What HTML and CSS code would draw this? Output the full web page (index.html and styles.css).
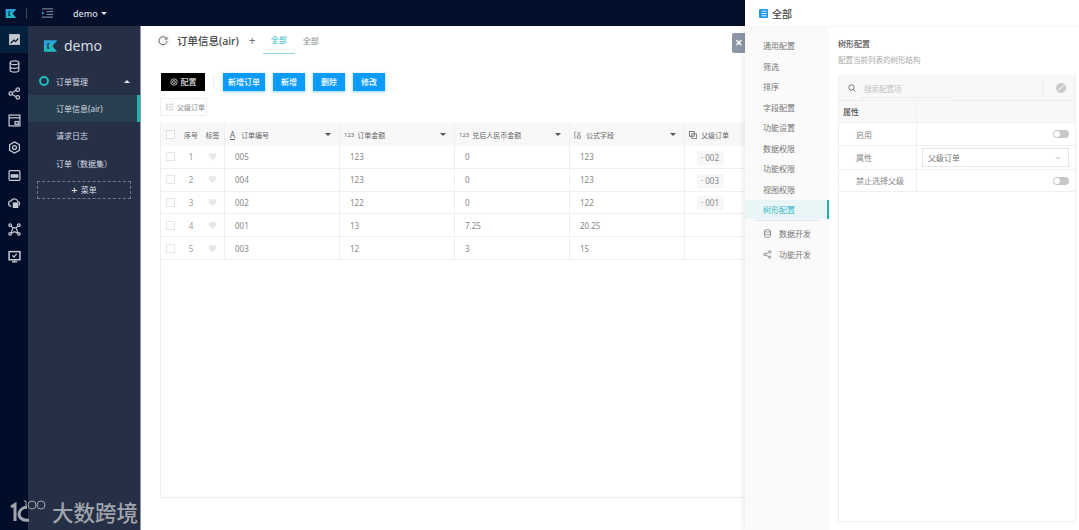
FILE: index.html
```html
<!DOCTYPE html>
<html lang="zh">
<head>
<meta charset="utf-8">
<title>订单信息(air)</title>
<link rel="stylesheet" href="styles.css">
</head>
<body>
<div class="app">
  <header class="topbar">
    <svg class="brand" viewBox="0 0 16 14"><path fill-rule="evenodd" d="M1 1h14l-5 6 5 6H1zM4.500 4v6h2.800L5.500 7l1.800-3z" fill="#1fb5c4"/><path d="M1 1h14l-2.500 3H4.500v3H1z" fill="#2a9fe0"/></svg>
    <span class="vline"></span>
    <svg class="fold" viewBox="0 0 12 10" fill="none" stroke="#9aa4b5" stroke-width="1"><path d="M0 .5h12M5 3.500h7M5 6.500h7M0 9.500h12"/><path d="M0 3l2.500 2L0 7z" fill="#2a9fe0" stroke="none"/></svg>
    <span class="app-name">demo</span><span class="caret-white"></span>
  </header>
  <div class="body">
    <nav class="rail">
      <div class="rail-item on"><svg viewBox="0 0 12 12"><rect x="1" y="1" width="10" height="10" fill="#c4c9d2"/><path d="M2.500 9.500l3-3 1.500 1.500 2.500-3" stroke="#04102b" fill="none"/></svg></div>
      <div class="rail-item"><svg viewBox="0 0 12 12" fill="none" stroke="#c4c9d2"><ellipse cx="6" cy="2.500" rx="4" ry="1.700"/><path d="M2 2.500v7c0 1 1.800 1.700 4 1.700s4-.7 4-1.700v-7M2 6c0 1 1.800 1.700 4 1.700S10 7 10 6"/></svg></div>
      <div class="rail-item"><svg viewBox="0 0 12 12" fill="none" stroke="#c4c9d2"><circle cx="2.500" cy="6" r="1.600"/><circle cx="9" cy="2.500" r="1.600"/><circle cx="9" cy="9.500" r="1.600"/><path d="M4 5l3.500-2M4 7l3.500 2"/></svg></div>
      <div class="rail-item"><svg viewBox="0 0 12 12" fill="none" stroke="#c4c9d2"><rect x="1" y="1" width="10" height="10"/><path d="M1 3.500h10"/><rect x="6.500" y="7" width="3" height="2.500"/></svg></div>
      <div class="rail-item"><svg viewBox="0 0 12 12" fill="none" stroke="#c4c9d2"><path d="M6 .8l4.500 2.600v5.200L6 11.200 1.500 8.600V3.400z"/><circle cx="6" cy="6" r="1.800"/></svg></div>
      <div class="rail-item"><svg viewBox="0 0 12 12" fill="none" stroke="#c4c9d2"><rect x="1" y="1.500" width="10" height="9" rx="1"/><path d="M3 5.500h6v2H3z" fill="#c4c9d2"/></svg></div>
      <div class="rail-item"><svg viewBox="0 0 12 12" fill="none" stroke="#c4c9d2"><path d="M3 9.500a2.500 2.500 0 0 1 0-5 3.200 3.200 0 0 1 6 .5 2 2 0 0 1 1 3.500"/><rect x="5" y="6.500" width="4" height="4" fill="#c4c9d2"/></svg></div>
      <div class="rail-item"><svg viewBox="0 0 12 12" fill="none" stroke="#c4c9d2"><circle cx="2" cy="2" r="1.200"/><circle cx="10" cy="2" r="1.200"/><circle cx="2" cy="10" r="1.200"/><circle cx="10" cy="10" r="1.200"/><path d="M3 3l1.500 1.500h3L9 3M4.500 4.500l-1 3-.5 1.500M7.500 4.500l1 3 .5 1.500M3 9.500l3-1.500 3 1.500"/></svg></div>
      <div class="rail-item"><svg viewBox="0 0 12 12" fill="none" stroke="#c4c9d2"><rect x="1" y="1.500" width="10" height="7.500" stroke-width="1.400"/><path d="M4 5l1.500 1.500L8 3.500M6 9v2M3.500 11h5"/></svg></div>
    </nav>
    <aside class="side">
      <div class="side-logo">
        <svg class="side-mark" viewBox="0 0 16 14"><path fill-rule="evenodd" d="M1 1h14l-5 6 5 6H1zM4.500 4v6h2.800L5.500 7l1.800-3z" fill="#22b8bf"/><path d="M1 1h14l-2.500 3H4.500v3H1z" fill="#2a9fe0"/></svg>
        <span>demo</span>
      </div>
      <div class="group"><span class="ring"></span><span class="group-name">订单管理</span><span class="caret-up"></span></div>
      <div class="side-link active">订单信息(air)</div>
      <div class="side-link">请求日志</div>
      <div class="side-link">订单（数据集）</div>
      <div class="add-menu"><span class="plus">+</span> 菜单</div>
    </aside>
    <main class="main">
      <div class="title-row">
        <span class="refresh"><svg viewBox="0 0 10 10" fill="none" stroke="#666"><path d="M8.600 3A4 4 0 1 0 9 5"/><path d="M9 1v2.300H6.700" stroke-width=".8"/></svg></span>
        <h1 class="page-title">订单信息(air)</h1>
        <span class="add-tab">+</span>
        <span class="tab tab-on">全部</span>
        <span class="tab">全部</span>
      </div>
      <div class="actions">
        <button class="btn btn-black"><svg class="gear" viewBox="0 0 10 10" fill="none" stroke="#ddd"><circle cx="5" cy="5" r="4"/><circle cx="5" cy="5" r="1.800"/></svg>配置</button>
        <span class="sep"></span>
        <button class="btn btn-blue btn-wide">新增订单</button>
        <button class="btn btn-blue">新增</button>
        <button class="btn btn-blue">删除</button>
        <button class="btn btn-blue">修改</button>
      </div>
      <div class="tree-btn-row">
        <span class="tree-btn"><svg viewBox="0 0 10 10" fill="none" stroke="#aaa" stroke-width=".8"><path d="M1 1v8M1 1.500h1M1 5h1M1 8.500h1M3.500 1.500h6M3.500 5h6M3.500 8.500h6"/></svg>父级订单</span>
      </div>
      <div class="table">
        <div class="tr th">
          <div class="c-fixed"><span class="chk chk-h"></span><span class="seq">序号</span><span class="tag">标签</span></div>
          <div class="col"><span class="ty ty-a">A</span>订单编号<span class="sort"></span></div>
          <div class="col"><span class="ty">123</span>订单金额<span class="sort"></span></div>
          <div class="col"><span class="ty">123</span>兑后人民币金额<span class="sort"></span></div>
          <div class="col"><svg class="ty-i" viewBox="0 0 10 10" fill="none" stroke="#666" stroke-width=".8"><path d="M1 1v8h1M1 1h1M4 1l4 4M8 1L4 5M4 6h4v3H4z"/></svg>公式字段<span class="sort"></span></div>
          <div class="col"><svg class="ty-i" viewBox="0 0 10 10" fill="none" stroke="#555" stroke-width=".9"><rect x=".5" y=".5" width="6" height="6"/><path d="M3.500 3.500h6v6h-6z"/></svg>父级订单</div>
        </div>
        <div class="tr"><div class="c-fixed"><span class="chk"></span><span class="seq n">1</span><span class="tag"><span class="heart">♥</span></span></div><div class="col">005</div><div class="col">123</div><div class="col">0</div><div class="col">123</div><div class="col"><span class="chip">· 002</span></div></div>
        <div class="tr"><div class="c-fixed"><span class="chk"></span><span class="seq n">2</span><span class="tag"><span class="heart">♥</span></span></div><div class="col">004</div><div class="col">123</div><div class="col">0</div><div class="col">123</div><div class="col"><span class="chip">· 003</span></div></div>
        <div class="tr"><div class="c-fixed"><span class="chk"></span><span class="seq n">3</span><span class="tag"><span class="heart">♥</span></span></div><div class="col">002</div><div class="col">122</div><div class="col">0</div><div class="col">122</div><div class="col"><span class="chip">· 001</span></div></div>
        <div class="tr"><div class="c-fixed"><span class="chk"></span><span class="seq n">4</span><span class="tag"><span class="heart">♥</span></span></div><div class="col">001</div><div class="col">13</div><div class="col">7.25</div><div class="col">20.25</div><div class="col"></div></div>
        <div class="tr"><div class="c-fixed"><span class="chk"></span><span class="seq n">5</span><span class="tag"><span class="heart">♥</span></span></div><div class="col">003</div><div class="col">12</div><div class="col">3</div><div class="col">15</div><div class="col"></div></div>
      </div>
    </main>
  </div>
  <div class="watermark">
    <svg class="wm-logo" viewBox="0 0 37 24" fill="none" stroke="#a0a4ab"><path d="M1 8l4-2.500V22" stroke-width="3"/><path d="M17 8a8.500 8.500 0 0 0-8 7c0 4 4 7 10 6" stroke-width="3"/><path d="M14 2h2v8" stroke-width="1"/><circle cx="22" cy="6" r="4"/><circle cx="31" cy="6" r="4"/></svg>
    <span>大数跨境</span>
  </div>
  <button class="close">✕</button>
  <section class="drawer">
    <div class="drawer-head">
      <svg class="doc" viewBox="0 0 9 9"><rect width="9" height="9" rx="1" fill="#1e96ec"/><path d="M2.500 2.200h5M2.500 4.500h5M2.500 6.800h5" stroke="#fff" stroke-width=".9"/></svg>
      <span>全部</span>
    </div>
    <div class="drawer-body">
      <div class="d-menu">
        <div class="d-item">通用配置</div>
        <div class="d-item">筛选</div>
        <div class="d-item">排序</div>
        <div class="d-item">字段配置</div>
        <div class="d-item">功能设置</div>
        <div class="d-item">数据权限</div>
        <div class="d-item">功能权限</div>
        <div class="d-item">视图权限</div>
        <div class="d-item d-on">树形配置</div>
        <div class="d-div"></div>
        <div class="d-sub"><svg viewBox="0 0 12 12" fill="none" stroke="#777"><ellipse cx="6" cy="2.500" rx="4" ry="1.700"/><path d="M2 2.500v7c0 1 1.800 1.700 4 1.700s4-.7 4-1.700v-7M2 6c0 1 1.800 1.700 4 1.700S10 7 10 6"/></svg>数据开发</div>
        <div class="d-sub"><svg viewBox="0 0 12 12" fill="none" stroke="#777"><circle cx="2.500" cy="6" r="1.600"/><circle cx="9" cy="2.500" r="1.600"/><circle cx="9" cy="9.500" r="1.600"/><path d="M4 5l3.500-2M4 7l3.500 2"/></svg>功能开发</div>
      </div>
      <div class="d-content">
        <h2 class="d-title">树形配置</h2>
        <p class="d-desc">配置当前列表的树形结构</p>
        <div class="cfg">
          <div class="cfg-search">
            <svg class="search-i" viewBox="0 0 10 10" fill="none" stroke="#555"><circle cx="4.300" cy="4.300" r="3.300"/><path d="M6.800 6.800L9.200 9.200"/></svg>
            <span class="search-input">搜索配置项</span>
            <span class="search-sep"></span>
            <svg class="ban" viewBox="0 0 10 10"><circle cx="5" cy="5" r="5" fill="#c9c9c9"/><path d="M2.500 7.500l5-5" stroke="#fff"/></svg>
          </div>
          <div class="cfg-row cfg-h"><div class="k">属性</div><div class="v"></div></div>
          <div class="cfg-row r1"><div class="k ki">启用</div><div class="v"><span class="sw"></span></div></div>
          <div class="cfg-row r2"><div class="k ki">属性</div><div class="v"><div class="select"><span>父级订单</span><svg viewBox="0 0 8 5" fill="none" stroke="#999" stroke-width=".8"><path d="M1 1l3 3 3-3"/></svg></div></div></div>
          <div class="cfg-row r3"><div class="k ki">禁止选择父级</div><div class="v"><span class="sw"></span></div></div>
        </div>
      </div>
    </div>
  </section>
</div>
</body>
</html>
```
FILE: styles.css
```css
* { box-sizing: border-box; }
html, body { margin: 0; height: 100%; overflow: hidden; }
body { font-family: "Noto Sans", "Noto Sans CJK SC", sans-serif; font-size: 8px; color: #666; background: #fff; }
.app { position: relative; width: 1079px; height: 530px; display: flex; flex-direction: column; overflow: hidden; }

.topbar { height: 26px; background: #04102b; display: flex; align-items: center; flex: none; color: #d8dce3; padding-left: 5px; }
.brand { width: 12px; height: 11px; }
.vline { width: 1px; height: 11px; background: #3a4559; margin-left: 9px; }
.fold { width: 11px; height: 10px; margin-left: 15px; }
.app-name { font-size: 9px; font-weight: 500; margin-left: 20px; }
.caret-white { margin-left: 3px; border: 3px solid transparent; border-top: 3px solid #e4e7ec; border-bottom: 0; width: 0; height: 0; }

.body { flex: 1; display: flex; min-height: 0; }
.rail { width: 28px; background: #020d29; flex: none; display: flex; flex-direction: column; }
.rail-item { height: 27.100px; display: flex; align-items: center; justify-content: center; }
.rail-item svg { width: 13px; height: 13px; stroke-width: 1.150; }
.rail-item.on { background: #03203d; }

.side { width: 113px; background: #252f45; flex: none; border-right: 1px solid #8c97a6; color: #d6dae1; display: flex; flex-direction: column; }
.side-logo { height: 41px; padding: 0 0 2px 15px; display: flex; align-items: center; gap: 6px; font-size: 14px; color: #d9dde3; }
.side-mark { width: 15px; height: 14px; }
.group { height: 28px; display: flex; align-items: center; padding-left: 11px; font-size: 8px; }
.ring { width: 10px; height: 10px; border: 2px solid #1fbdc4; border-radius: 50%; }
.group-name { margin-left: 7px; flex: 1; }
.caret-up { border: 3px solid transparent; border-bottom: 3px solid #e4e7ec; border-top: 0; margin-right: 10px; }
.side-link { height: 27.300px; display: flex; align-items: center; padding-left: 28px; font-size: 8px; }
.side-link.active { background: #273f4f; border-right: 3px solid #22b2ac; }
.add-menu { margin: 4px 9px 0 9px; height: 18px; border: 1px dashed #6f7889; display: flex; align-items: center; justify-content: center; gap: 3px; font-size: 8px; color: #d6dae1; }
.plus { font-size: 11px; line-height: 1; color: #eee; }

.main { flex: 1; padding: 0 0 0 19px; display: flex; flex-direction: column; min-width: 0; }
.title-row { height: 28px; display: flex; align-items: center; flex: none; }
.refresh { width: 14px; height: 14px; display: flex; align-items: center; justify-content: center; margin: 2px 7px 0 -4px; border-radius: 50%; background: #f6f6f6; }
.refresh svg { width: 10px; height: 10px; }
.page-title { margin: 2px 0 0; font-size: 10.500px; font-weight: 500; color: #444; line-height: 1; }
.add-tab { margin: 2px 0 0 10px; font-size: 12px; color: #777; line-height: 1; }
.tab { width: 32px; height: 28px; display: flex; align-items: center; justify-content: center; font-size: 8px; color: #888; margin-left: 7px; }
.tab + .tab { margin-left: 0; }
.tab-on { color: #2bb6cf; border-bottom: 1px solid #8fdbe6; }

.actions { display: flex; align-items: center; margin-top: 18px; padding-left: 1px; flex: none; height: 19px; }
.btn { border: 0; padding: 0; height: 18px; font: 500 8px "Noto Sans", "Noto Sans CJK SC", sans-serif; color: #fff; display: flex; align-items: center; justify-content: center; }
.btn-black { width: 44px; background: #000; gap: 3px; color: #ddd; }
.gear { width: 8px; height: 8px; }
.sep { width: 1px; height: 12px; background: #eee; margin: 0 9px 0 8px; }
.btn-blue { background: #0a9bfb; box-shadow: 0 1px 3px rgba(10,155,251,.45); width: 32px; margin-right: 8px; }
.btn-wide { width: 42px; }
.tree-btn-row { margin-top: 7px; flex: none; }
.tree-btn { display: inline-flex; align-items: center; gap: 3px; height: 18px; width: 47px; padding-left: 5px; border: 1px solid #efefef; border-radius: 1px; font-size: 7px; color: #888; white-space: nowrap; }
.tree-btn svg { width: 8px; height: 8px; flex: none; }

.table { margin-top: 7px; width: 585px; height: 375px; border: solid #eee; border-width: 0 0 1px 1px; flex: none; overflow: hidden; }
.tr { display: flex; height: 22.800px; border-bottom: 1px solid #efefef; align-items: stretch; font-size: 8px; color: #888; }
.th { height: 23px; background: #f8f8f8; border-bottom: 0; color: #666; font-size: 7px; }
.c-fixed { width: 64px; display: flex; align-items: center; border-right: 1px solid #efefef; flex: none; }
.chk { width: 9px; height: 9px; border: 1px solid #e6e6e6; background: #fff; margin-left: 5px; flex: none; }
.chk-h { border-color: #ddd; }
.seq { width: 20px; margin-left: 6px; text-align: center; flex: none; }
.seq.n { color: #999; }
.tag { flex: 1; text-align: center; }
.heart { color: #e8e8e8; font-size: 9px; }
.col { width: 115px; flex: none; display: flex; align-items: center; padding-left: 10px; border-right: 1px solid #efefef; }
.th .col { padding-left: 4px; }
.ty { font-size: 6px; margin-right: 3px; }
.ty-a { font-size: 8px; text-decoration: underline; margin: 0 5px 0 0; padding: 0 1px; }
.ty-i { width: 8px; height: 8px; margin-right: 4px; }
.sort { border: 3px solid transparent; border-top: 3px solid #555; border-bottom: 0; margin-left: auto; margin-right: 8px; }
.chip { background: #f6f7f9; padding: 0 5px 0 4px; height: 14px; line-height: 14px; margin: 2px 0 0 2px; color: #888; }
.col:last-child { border-right: 0; width: 60px; }

.watermark { position: absolute; left: 10px; bottom: 7px; display: flex; align-items: center; gap: 5px; font-size: 21.500px; line-height: 1; font-weight: 500; color: #a0a4ab; }
.wm-logo { width: 37px; height: 24px; margin-top: -3px; }
.close { position: absolute; left: 732px; top: 33px; width: 13px; height: 20px; padding: 0; border: 0; border-radius: 2px 0 0 2px; background: #8c97a6; color: #fff; font-size: 9px; font-weight: 700; line-height: 1; }

.drawer { position: absolute; right: 0; top: 0; bottom: 0; width: 334px; background: #fff; box-shadow: -2px 0 6px rgba(0,0,0,.08); display: flex; flex-direction: column; }
.drawer-head { height: 27px; display: flex; align-items: center; gap: 4px; padding-left: 14px; font-size: 10px; font-weight: 500; color: #444; border-bottom: 1px solid #f7f7f7; flex: none; }
.doc { width: 9px; height: 9px; }
.drawer-body { flex: 1; display: flex; min-height: 0; }
.d-menu { width: 84px; background: #fafafa; flex: none; padding-top: 9px; }
.d-item { height: 20.500px; line-height: 20.500px; padding-left: 18px; font-size: 8px; color: #777; }
.d-on { background: #e8f6f8; color: #39b8c4; border-right: 2px solid #22b2ac; height: 19px; line-height: 19px; }
.d-div { height: 1px; background: #e8e8e8; margin: 1px 8px 2px 9px; }
.d-sub { height: 21px; display: flex; align-items: center; padding-left: 18px; gap: 7px; font-size: 8px; color: #777; }
.d-sub svg { width: 9px; height: 9px; }
.d-content { flex: 1; padding: 11px 3px 8px 9px; display: flex; flex-direction: column; min-width: 0; }
.d-title { margin: 0; font-size: 8px; line-height: 12px; font-weight: 500; color: #555; }
.d-desc { margin: 4px 0 0; font-size: 7.500px; line-height: 12px; color: #aaa; }
.cfg { margin-top: 9px; flex: 1; border: 1px solid #f0f0f0; border-top: 0; }
.cfg-search { height: 26px; background: #f8f8f8; display: flex; align-items: center; padding-left: 9px; border-bottom: 1px solid #eee; }
.search-i { width: 8px; height: 8px; flex: none; }
.search-input { width: 90px; margin-left: 5px; padding-left: 3px; font-size: 7.500px; height: 17px; line-height: 16px; margin-top: 3px; color: #c4c4c4; border-bottom: 1px solid #eaeaea; }
.search-sep { width: 1px; height: 17px; background: #eee; margin-left: 91px; }
.ban { width: 10px; height: 10px; margin-left: 13px; }
.cfg-row { display: flex; border-bottom: 1px solid #f0f0f0; font-size: 8px; color: #888; }
.cfg-h { height: 22px; background: #f8f8f8; color: #555; font-weight: 500; }
.r1 { height: 23px; }
.r2 { height: 24px; }
.r3 { height: 22px; }
.k { width: 78px; flex: none; border-right: 1px solid #f0f0f0; padding-left: 4px; display: flex; align-items: center; }
.ki { padding-left: 17px; }
.v { flex: 1; display: flex; align-items: center; justify-content: flex-end; padding-right: 6px; }
.sw { width: 16px; height: 8px; border-radius: 4px; background: #c8c8c8; position: relative; }
.sw::after { content: ""; position: absolute; left: 1px; top: 1px; width: 6px; height: 6px; border-radius: 50%; background: #fff; }
.select { width: 147px; height: 19px; border: 1px solid #e6e6e6; display: flex; align-items: center; justify-content: space-between; padding: 0 7px 0 5px; font-size: 8px; color: #777; }
.select svg { width: 6px; height: 4px; }
```
